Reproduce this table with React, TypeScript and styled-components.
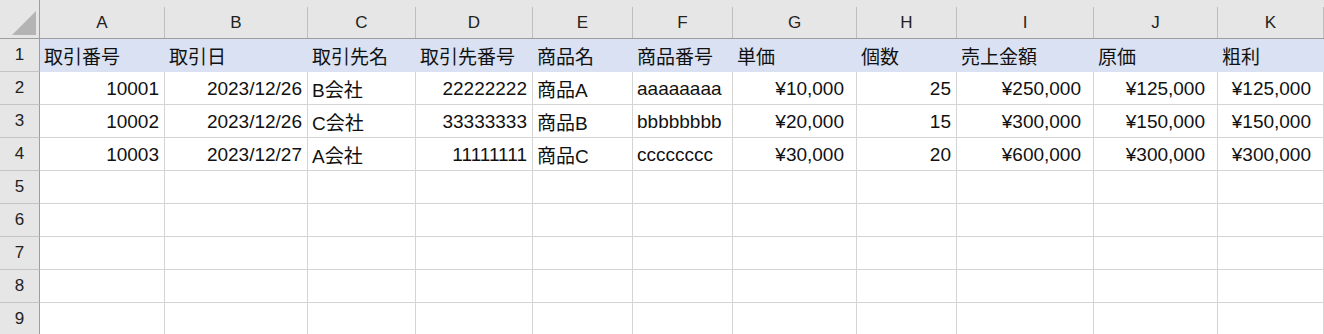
import React from 'react';
import styled, { createGlobalStyle } from 'styled-components';

const GlobalStyle = createGlobalStyle`
  html, body {
    margin: 0;
    padding: 0;
    background: #ffffff;
    overflow: hidden;
  }
`;

const COLUMN_WIDTHS = [40, 125, 143, 108, 117, 100, 100, 124, 100, 137, 124, 106];
const LETTERS = ['A', 'B', 'C', 'D', 'E', 'F', 'G', 'H', 'I', 'J', 'K'];

type Align = 'left' | 'right' | 'money';

interface CellData {
  text: string;
  align: Align;
}

const titles = ['取引番号', '取引日', '取引先名', '取引先番号', '商品名', '商品番号', '単価', '個数', '売上金額', '原価', '粗利'];

const records: string[][] = [
  ['10001', '2023/12/26', 'B会社', '22222222', '商品A', 'aaaaaaaa', '¥10,000', '25', '¥250,000', '¥125,000', '¥125,000'],
  ['10002', '2023/12/26', 'C会社', '33333333', '商品B', 'bbbbbbbb', '¥20,000', '15', '¥300,000', '¥150,000', '¥150,000'],
  ['10003', '2023/12/27', 'A会社', '11111111', '商品C', 'cccccccc', '¥30,000', '20', '¥600,000', '¥300,000', '¥300,000'],
];

const leftColumns = [2, 4, 5];
const moneyColumns = [6, 8, 9, 10];

const Sheet = styled.div`
  display: grid;
  grid-template-columns: ${COLUMN_WIDTHS.map((w) => `${w}px`).join(' ')};
  grid-template-rows: 39px repeat(9, 33px);
  width: 1324px;
  height: 334px;
  overflow: hidden;
  font-family: 'Liberation Sans', 'Noto Sans CJK JP', sans-serif;
  color: #111;
`;

const Corner = styled.div`
  box-sizing: border-box;
  background: #e6e6e6;
  border-right: 1px solid #9e9e9e;
  border-bottom: 1px solid #9e9e9e;
  display: flex;
  align-items: flex-start;
  justify-content: flex-start;
  padding: 11px 0 0 12px;
`;

const Triangle = styled.div`
  width: 0;
  height: 0;
  border-left: 24px solid transparent;
  border-bottom: 24px solid #b4b4b4;
`;

const ColumnHeader = styled.div`
  box-sizing: border-box;
  background: #e6e6e6;
  padding-top: 7px;
  border-bottom: 1px solid #9e9e9e;
`;

const ColumnLabel = styled.div`
  height: 31px;
  box-sizing: border-box;
  border-right: 1px solid #bdbdbd;
  display: flex;
  align-items: center;
  justify-content: center;
  font-size: 17px;
  color: #222;
`;

const RowHeader = styled.div`
  box-sizing: border-box;
  background: #e6e6e6;
  border-right: 1px solid #9e9e9e;
  border-bottom: 1px solid #c4c4c4;
  display: flex;
  align-items: center;
  justify-content: center;
  font-size: 17px;
  color: #222;
`;

const padRight = { left: '0', right: '5px', money: '12px' };

const Cell = styled.div<{ $align: Align; $filled?: boolean }>`
  box-sizing: border-box;
  background: ${(p) => (p.$filled ? '#d9e1f2' : '#ffffff')};
  border-right: 1px solid ${(p) => (p.$filled ? '#d9e1f2' : '#d4d4d4')};
  border-bottom: 1px solid ${(p) => (p.$filled ? '#d9e1f2' : '#d4d4d4')};
  display: flex;
  align-items: center;
  justify-content: ${(p) => (p.$align === 'left' ? 'flex-start' : 'flex-end')};
  padding: 1px ${(p) => padRight[p.$align]} 0 ${(p) => (p.$align === 'left' ? '4px' : '0')};
  font-size: 19px;
  white-space: nowrap;
  overflow: hidden;
`;

function alignFor(i: number): Align {
  if (leftColumns.includes(i)) return 'left';
  if (moneyColumns.includes(i)) return 'money';
  return 'right';
}

function buildRows(): CellData[][] {
  const rows: CellData[][] = [];
  rows.push(titles.map((t) => ({ text: t, align: 'left' as Align })));
  records.forEach((r) => {
    rows.push(r.map((t, i) => ({ text: t, align: alignFor(i) })));
  });
  while (rows.length < 9) {
    rows.push(LETTERS.map(() => ({ text: '', align: 'left' as Align })));
  }
  return rows;
}

export default function App() {
  const rows = buildRows();

  return (
    <>
      <GlobalStyle />
      <Sheet>
        <Corner>
          <Triangle />
        </Corner>
        {LETTERS.map((l) => (
          <ColumnHeader key={l}>
            <ColumnLabel>{l}</ColumnLabel>
          </ColumnHeader>
        ))}
        {rows.map((row, r) => (
          <React.Fragment key={r}>
            <RowHeader>{r + 1}</RowHeader>
            {row.map((cell, c) => (
              <Cell key={c} $align={cell.align} $filled={r === 0}>
                {cell.text}
              </Cell>
            ))}
          </React.Fragment>
        ))}
      </Sheet>
    </>
  );
}
